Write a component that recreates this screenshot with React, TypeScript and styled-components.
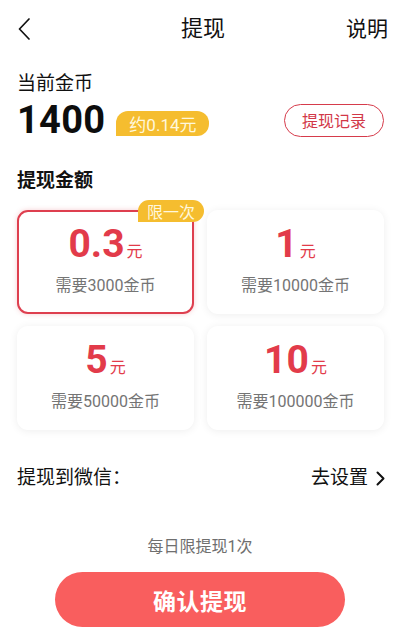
import React from "react";
import styled, { createGlobalStyle } from "styled-components";

const GlobalStyle = createGlobalStyle`
  html, body { margin: 0; padding: 0; background: #ffffff; }
  body { font-family: Roboto, "Noto Sans CJK SC", "Noto Sans", sans-serif; color: #1a1a1a; }
  * { box-sizing: border-box; }
`;

const Page = styled.div`
  width: 400px;
  height: 639px;
  background: #fff;
  overflow: hidden;
  display: flex;
  flex-direction: column;
`;

const Header = styled.div`
  height: 58px;
  display: grid;
  grid-template-columns: 1fr auto 1fr;
  align-items: center;
  padding: 0 12px 0 18px;
`;

const BackButton = styled.div`
  display: flex;
  align-items: center;
  justify-self: start;
`;

const Title = styled.div`
  font-size: 22px;
  color: #111;
  line-height: 28px;
`;

const HeaderAction = styled.div`
  justify-self: end;
  font-size: 21px;
  color: #111;
  line-height: 28px;
`;

const CoinSection = styled.div`
  padding: 0 16px 0 17px;
  display: flex;
  flex-direction: column;
`;

const CoinLabel = styled.div`
  margin-top: 13px;
  font-size: 19px;
  line-height: 26px;
  color: #111;
`;

const BalanceRow = styled.div`
  margin-top: 5px;
  display: flex;
  align-items: center;
  height: 36px;
`;

const Balance = styled.div`
  font-family: Roboto, sans-serif;
  font-weight: 700;
  font-size: 38px;
  line-height: 36px;
  color: #0d0d0d;
  letter-spacing: 0.3px;
`;

const YellowTag = styled.div`
  background: #f5bd2f;
  color: #fff7dc;
  border-radius: 12px 12px 12px 0;
  display: flex;
  align-items: center;
  justify-content: center;
`;

const Estimate = styled(YellowTag)`
  margin-left: 11px;
  margin-top: 7px;
  height: 25px;
  width: 93px;
  font-size: 17px;
`;

const RecordButton = styled.div`
  margin-left: auto;
  width: 100px;
  height: 33px;
  border: 1.5px solid #d63b4b;
  border-radius: 17px;
  color: #d23848;
  font-size: 16px;
  display: flex;
  align-items: center;
  justify-content: center;
`;

const SectionTitle = styled.div`
  margin-top: 30px;
  padding-left: 17px;
  font-size: 19px;
  font-weight: 700;
  line-height: 26px;
  color: #111;
`;

const Grid = styled.div`
  margin-top: 16px;
  padding: 0 16px 0 17px;
  display: grid;
  grid-template-columns: 1fr 1fr;
  column-gap: 13px;
  row-gap: 12px;
`;

const Card = styled.div<{ $active?: boolean }>`
  position: relative;
  height: 104px;
  border-radius: 11px;
  background: #fff;
  border: 2px solid ${(p) => (p.$active ? "#de3f4f" : "transparent")};
  box-shadow: ${(p) =>
    p.$active
      ? "0 0 5px rgba(222, 63, 79, 0.25)"
      : "0 1px 8px rgba(0, 0, 0, 0.07)"};
  display: flex;
  flex-direction: column;
  align-items: center;
  padding-top: 12px;
  gap: 3px;
`;

const Amount = styled.div`
  display: flex;
  align-items: baseline;
  line-height: 40px;
  color: #e23b4a;
`;

const AmountValue = styled.span`
  font-family: Roboto, sans-serif;
  font-weight: 700;
  font-size: 39px;
`;

const AmountUnit = styled.span`
  font-size: 16px;
  margin-left: 2px;
`;

const Requirement = styled.div`
  font-size: 16px;
  line-height: 22px;
  color: #747474;
`;

const LimitTag = styled(YellowTag)`
  position: absolute;
  top: -12px;
  right: -12px;
  width: 66px;
  height: 22px;
  font-size: 16px;
`;

const WechatRow = styled.div`
  margin-top: 35px;
  padding: 0 15px 0 17px;
  display: flex;
  align-items: center;
  justify-content: space-between;
  line-height: 26px;
  font-size: 19px;
  color: #111;
`;

const SetupLink = styled.div`
  display: flex;
  align-items: center;
  gap: 8px;
`;

const DailyLimit = styled.div`
  margin-top: 45px;
  text-align: center;
  font-size: 16px;
  line-height: 22px;
  color: #6f6f6f;
`;

const ConfirmButton = styled.div`
  margin: 14px auto 0;
  width: 290px;
  height: 55px;
  border-radius: 28px;
  background: #f95e5e;
  color: #fff;
  font-size: 23px;
  font-weight: 700;
  letter-spacing: 0.5px;
  display: flex;
  align-items: center;
  justify-content: center;
`;

const options = [
  { value: "0.3", need: "3000", active: true, tag: "限一次" },
  { value: "1", need: "10000" },
  { value: "5", need: "50000" },
  { value: "10", need: "100000" },
];

export default function App() {
  return (
    <Page>
      <GlobalStyle />
      <Header>
        <BackButton>
          <svg width="12" height="22" viewBox="0 0 12 22" fill="none">
            <polyline points="11,1 1.5,11 11,21" stroke="#111" strokeWidth="1.7" strokeLinecap="round" strokeLinejoin="round" />
          </svg>
        </BackButton>
        <Title>提现</Title>
        <HeaderAction>说明</HeaderAction>
      </Header>

      <CoinSection>
        <CoinLabel>当前金币</CoinLabel>
        <BalanceRow>
          <Balance>1400</Balance>
          <Estimate>约0.14元</Estimate>
          <RecordButton>提现记录</RecordButton>
        </BalanceRow>
      </CoinSection>

      <SectionTitle>提现金额</SectionTitle>

      <Grid>
        {options.map((o) => (
          <Card key={o.value} $active={o.active}>
            {o.tag && <LimitTag>{o.tag}</LimitTag>}
            <Amount>
              <AmountValue>{o.value}</AmountValue>
              <AmountUnit>元</AmountUnit>
            </Amount>
            <Requirement>需要{o.need}金币</Requirement>
          </Card>
        ))}
      </Grid>

      <WechatRow>
        <span>提现到微信：</span>
        <SetupLink>
          <span>去设置</span>
          <svg width="9" height="15" viewBox="0 0 9 15" fill="none">
            <polyline points="1.5,1.5 7.5,7.5 1.5,13.5" stroke="#111" strokeWidth="2" strokeLinecap="round" strokeLinejoin="round" />
          </svg>
        </SetupLink>
      </WechatRow>

      <DailyLimit>每日限提现1次</DailyLimit>
      <ConfirmButton>确认提现</ConfirmButton>
    </Page>
  );
}
